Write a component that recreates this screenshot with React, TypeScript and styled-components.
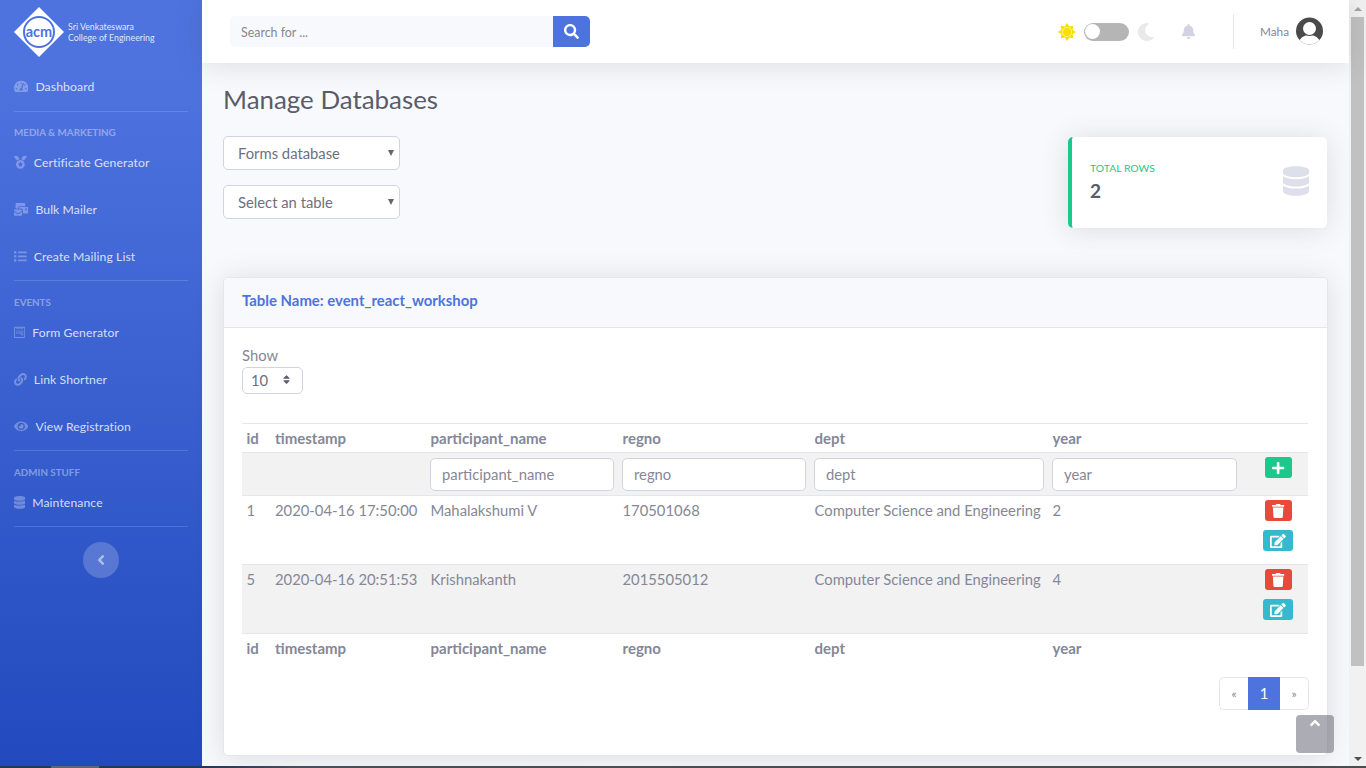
import React from 'react';
import styled, { createGlobalStyle } from 'styled-components';
import {
  FaAngleLeft,
  FaAngleUp,
  FaBell,
  FaDatabase,
  FaEdit,
  FaEye,
  FaLink,
  FaList,
  FaMailBulk,
  FaMedal,
  FaMoon,
  FaPlus,
  FaSearch,
  FaSort,
  FaTachometerAlt,
  FaTrash,
  FaWpforms,
} from 'react-icons/fa';

const font = `Lato, "Noto Sans", sans-serif`;

const GlobalStyle = createGlobalStyle`
  html, body {
    margin: 0;
    height: 768px;
    overflow: hidden;
  }

  body {
    font-family: ${font};
    font-size: 15px;
    color: #858796;
    background: #f8f9fc;
  }

  * {
    box-sizing: border-box;
  }
`;

const Shell = styled.div`
  display: flex;
  height: 766px;
  position: relative;
  overflow: hidden;
`;

const Sidebar = styled.nav`
  display: flex;
  flex-direction: column;
  flex: 0 0 202px;
  padding: 0 14px;
  background: linear-gradient(180deg, #4e73df 10%, #224abe 100%);
`;

const Brand = styled.div`
  display: flex;
  align-items: center;
  height: 64px;
  gap: 4px;
`;

const BrandText = styled.div`
  font-size: 8.8px;
  line-height: 11px;
  color: rgba(255, 255, 255, 0.85);
`;

const NavItem = styled.a`
  display: flex;
  align-items: center;
  gap: 7px;
  height: 47px;
  padding-bottom: 2px;
  font-size: 12.2px;
  letter-spacing: 0.1px;
  color: rgba(255, 255, 255, 0.8);
`;

const NavIcon = styled.span<{ $width: number }>`
  display: flex;
  flex: none;
  width: ${(p) => p.$width}px;
  height: 12.8px;
  color: rgba(255, 255, 255, 0.3);

  svg {
    width: 100%;
    height: 100%;
  }
`;

const Divider = styled.hr<{ $up?: boolean }>`
  width: 100%;
  height: 1px;
  margin: ${(p) => (p.$up ? '-1px 0 1px' : '0')};
  border: 0;
  flex: none;
  background: rgba(255, 255, 255, 0.15);
`;

const SectionTitle = styled.div`
  height: 28px;
  padding-top: 14px;
  line-height: 12px;
  font-size: 9.8px;
  font-weight: 700;
  color: rgba(255, 255, 255, 0.4);
  text-transform: uppercase;
`;

const CollapseButton = styled.button`
  display: flex;
  align-items: center;
  justify-content: center;
  align-self: center;
  width: 36px;
  height: 36px;
  margin-top: 14px;
  padding: 0;
  border: 0;
  border-radius: 50%;
  background: rgba(255, 255, 255, 0.2);
  color: rgba(255, 255, 255, 0.5);
  font-size: 16px;
`;

const Main = styled.div`
  display: flex;
  flex-direction: column;
  flex: 1;
  min-width: 0;
`;

const Topbar = styled.header`
  display: flex;
  align-items: center;
  flex: 0 0 63px;
  padding: 0 26px 0 28px;
  background: #fff;
  box-shadow: 0 2px 28px rgba(58, 59, 69, 0.15);
  position: relative;
`;

const SearchBox = styled.form`
  display: flex;
  width: 360px;
  height: 31px;
  margin-right: auto;
`;

const SearchInput = styled.input`
  flex: 1;
  min-width: 0;
  padding: 1px 11px 0;
  border: 0;
  border-radius: 5px 0 0 5px;
  background: #f8f9fc;
  font-family: ${font};
  font-size: 12.4px;

  &::placeholder {
    color: #858796;
  }
`;

const SearchButton = styled.button`
  display: flex;
  align-items: center;
  justify-content: center;
  width: 37px;
  padding: 0;
  border: 0;
  border-radius: 0 5px 5px 0;
  background: #4e73df;
  color: #fff;
  font-size: 15px;
`;

const ThemeSwitch = styled.div`
  display: flex;
  align-items: center;
  gap: 8px;
  margin-right: 26px;
`;

const Track = styled.div`
  display: flex;
  align-items: center;
  width: 45px;
  height: 18px;
  padding: 0 1.5px;
  border-radius: 9px;
  background: #b5b5b5;
`;

const Knob = styled.div`
  width: 15px;
  height: 15px;
  border-radius: 50%;
  background: #fff;
`;

const MoonIcon = styled(FaMoon)`
  color: #e9e9e9;
  font-size: 18px;
`;

const BellIcon = styled(FaBell)`
  color: #d1d3e2;
  font-size: 15px;
`;

const TopDivider = styled.div`
  width: 1px;
  height: 35px;
  margin: 0 26px 0 37px;
  background: #e3e6f0;
`;

const UserName = styled.span`
  font-size: 11.8px;
  color: #858796;
  margin-right: 7px;
`;

const Content = styled.main`
  flex: 1;
  padding: 0 22px 0 21px;
  min-height: 0;
`;

const Title = styled.h1`
  margin: 0;
  padding-top: 20px;
  height: 73px;
  font-size: 25.9px;
  line-height: 32px;
  font-weight: 400;
  color: #5a5c69;
`;

const FilterRow = styled.section`
  display: flex;
  justify-content: space-between;
  height: 141px;
`;

const SelectStack = styled.div`
  display: flex;
  flex-direction: column;
  gap: 15px;
`;

const SelectWrap = styled.div`
  position: relative;
  width: 177px;
  height: 34px;

  &::after {
    content: '';
    position: absolute;
    right: 6px;
    top: 14px;
    border-left: 3px solid transparent;
    border-right: 3px solid transparent;
    border-top: 6px solid #666;
    pointer-events: none;
  }
`;

const DbSelect = styled.select`
  appearance: none;
  width: 100%;
  height: 100%;
  padding: 0 14px;
  border: 1px solid #d1d3e2;
  border-radius: 5px;
  background: #fff;
  font-family: ${font};
  font-size: 14.8px;
  color: #6e707e;
`;

const StatCard = styled.div`
  display: flex;
  align-items: center;
  justify-content: space-between;
  width: 259px;
  height: 91px;
  margin: 1px 0 0;
  padding: 0 18px 2px 18px;
  border-left: 4px solid #1cc88a;
  border-radius: 5px;
  background: #fff;
  box-shadow: 0 2px 28px rgba(58, 59, 69, 0.15);
`;

const StatLabel = styled.div`
  font-size: 10.4px;
  line-height: 14px;
  color: #1cc88a;
  text-transform: uppercase;
`;

const StatValue = styled.div`
  margin-top: 4px;
  font-size: 19px;
  line-height: 24px;
  font-weight: 700;
  color: #5a5c69;
`;

const StatIcon = styled(FaDatabase)`
  width: 26px;
  height: 30px;
  margin-bottom: 1px;
  color: #dddfeb;
`;

const TableCard = styled.section`
  width: 1105px;
  height: 479px;
  border: 1px solid #e3e6f0;
  border-radius: 5px;
  background: #fff;
  box-shadow: 0 2px 28px rgba(58, 59, 69, 0.15);
  overflow: hidden;
`;

const CardHeader = styled.div`
  display: flex;
  align-items: center;
  height: 50px;
  padding: 0 18px 5px;
  background: #f8f9fc;
  border-bottom: 1px solid #e3e6f0;
  font-size: 14.9px;
  font-weight: 700;
  color: #4e73df;
`;

const CardBody = styled.div`
  padding: 17px 18px 0;
`;

const ShowLabel = styled.div`
  font-size: 14.8px;
  line-height: 20px;
  margin-bottom: 2px;
`;

const PageSize = styled.div`
  display: flex;
  align-items: center;
  justify-content: space-between;
  width: 61px;
  height: 27px;
  padding: 0 10px 2px 8px;
  border: 1px solid #d1d3e2;
  border-radius: 5px;
  font-size: 14.8px;
  color: #6e707e;

  svg {
    font-size: 11px;
    color: #5a5c69;
  }
`;

const DataTable = styled.table`
  width: 1066px;
  margin-top: 29px;
  table-layout: fixed;
  border-collapse: collapse;
  font-size: 14.8px;
`;

const HeadCell = styled.th`
  height: 29px;
  padding: 0 4.5px 1px;
  border-top: 1px solid #e3e6f0;
  text-align: left;
  font-size: 15px;
  font-weight: 700;
  color: #858796;
`;

const FilterCell = styled.td`
  height: 43px;
  padding: 0 4px;
  border-top: 1px solid #e3e6f0;
  background: #f2f2f2;
  vertical-align: middle;
`;

const DataCell = styled.td<{ $shaded?: boolean }>`
  height: 69px;
  padding: 4.5px 4.5px 0;
  border-top: 1px solid #e3e6f0;
  background: ${(p) => (p.$shaded ? '#f2f2f2' : '#fff')};
  vertical-align: top;
  line-height: 18px;
`;

const ActionCell = styled(DataCell)`
  padding: 4px 15px 0 0;
`;

const FilterActionCell = styled(FilterCell)`
  padding: 0 15px 13px 0;
`;

const FilterInput = styled.input`
  display: block;
  width: 100%;
  height: 33px;
  padding: 0 11px;
  border: 1px solid #d1d3e2;
  border-radius: 5px;
  background: #fff;
  font-family: ${font};
  font-size: 14.8px;

  &::placeholder {
    color: #858796;
  }
`;

const ActionStack = styled.div`
  display: flex;
  flex-direction: column;
  align-items: flex-end;
  gap: 9px;
`;

const ActionButton = styled.button<{ $color: string; $wide?: boolean }>`
  display: flex;
  align-items: center;
  justify-content: center;
  width: ${(p) => (p.$wide ? '30px' : '27px')};
  height: 21px;
  margin-right: ${(p) => (p.$wide ? '0' : '1px')};
  margin-left: auto;
  padding: 0;
  border: 0;
  border-radius: 3px;
  background: ${(p) => p.$color};
  color: #fff;

  svg {
    width: ${(p) => (p.$wide ? '15.75px' : '12.25px')};
    height: 14px;
  }
`;

const Pagination = styled.ul`
  display: flex;
  justify-content: flex-end;
  margin: 14px 0 0;
  padding: 0;
  list-style: none;
`;

const PageLink = styled.li<{ $active?: boolean }>`
  display: flex;
  align-items: center;
  justify-content: center;
  width: ${(p) => (p.$active ? '32px' : '29px')};
  height: 33px;
  border: 1px solid ${(p) => (p.$active ? '#4e73df' : '#e3e6f0')};
  background: ${(p) => (p.$active ? '#4e73df' : '#fff')};
  color: ${(p) => (p.$active ? '#fff' : '#858796')};
  font-size: ${(p) => (p.$active ? '14.8px' : '12px')};

  &:first-child {
    border-right: 0;
    border-radius: 5px 0 0 5px;
  }

  &:last-child {
    border-left: 0;
    border-radius: 0 5px 5px 0;
  }
`;

const ScrollTop = styled.a`
  position: absolute;
  left: 1296px;
  top: 715px;
  display: flex;
  justify-content: center;
  width: 38px;
  height: 38px;
  border-radius: 4px;
  background: rgba(90, 92, 105, 0.5);
  color: #fff;
  font-size: 16px;
`;

const Scrollbar = styled.div`
  display: flex;
  flex-direction: column;
  align-items: center;
  flex: 0 0 17px;
  background: #f1f1f1;
`;

const ScrollThumb = styled.div`
  flex: none;
  width: 13px;
  height: 649px;
  background: #c1c1c1;
`;

const ArrowButton = styled.div<{ $down?: boolean }>`
  width: 0;
  height: 0;
  margin: ${(p) => (p.$down ? 'auto 0 5px' : '7px 0 6px')};
  border-left: 4px solid transparent;
  border-right: 4px solid transparent;
  border-${(p) => (p.$down ? 'top' : 'bottom')}: 4px solid ${(p) => (p.$down ? '#505050' : '#a3a3a3')};
`;

const BottomStrip = styled.div`
  display: flex;
  height: 2px;
  background: linear-gradient(90deg, #26345f 0, #26345f 200px, #4a4e5c 300px, #4d4d4d 100%);
`;

const StripTab = styled.div`
  width: 48px;
  margin-left: 51px;
  background: #5d6577;
`;

const Logo = () => (
  <svg width="50" height="50" viewBox="0 0 50 50" style={{ flex: 'none' }}>
    <polygon points="25,0 50,25 25,50 0,25" fill="#fff" />
    <circle cx="25" cy="25" r="15" fill="none" stroke="#4e73df" strokeWidth="2" />
    <text
      x="25"
      y="29.5"
      textAnchor="middle"
      fontFamily="Lato, sans-serif"
      fontSize="14.5"
      fontWeight="700"
      fill="#4e73df"
    >
      acm
    </text>
  </svg>
);

const SunIcon = () => (
  <svg width="18" height="18" viewBox="0 0 18 18">
    <polygon
      fill="#f7e000"
      points="9,0 11.3,3.46 15.36,2.64 14.54,6.7 18,9 14.54,11.3 15.36,15.36 11.3,14.54 9,18 6.7,14.54 2.64,15.36 3.46,11.3 0,9 3.46,6.7 2.64,2.64 6.7,3.46"
    />
    <circle cx="9" cy="9" r="4.6" fill="#f7e000" stroke="#fdf6a0" strokeWidth="0.9" />
  </svg>
);

const UserAvatar = () => (
  <svg width="27" height="29" viewBox="0 0 27 29">
    <defs>
      <clipPath id="avatar-clip">
        <circle cx="13.5" cy="14" r="13.5" />
      </clipPath>
    </defs>
    <circle cx="13.5" cy="14" r="13.5" fill="#4a4a4a" />
    <g clipPath="url(#avatar-clip)">
      <ellipse cx="13.5" cy="26" rx="10.5" ry="8" fill="#fff" />
      <circle cx="13.5" cy="11.5" r="7.5" fill="#4a4a4a" />
      <circle cx="13.5" cy="11.5" r="6.5" fill="#fff" />
    </g>
  </svg>
);

const columns = [
  { key: 'id', width: 28.5 },
  { key: 'timestamp', width: 155.5 },
  { key: 'participant_name', width: 192, filter: true },
  { key: 'regno', width: 192, filter: true },
  { key: 'dept', width: 238, filter: true },
  { key: 'year', width: 193, filter: true },
  { key: '', width: 67 },
];

const rows = [
  ['1', '2020-04-16 17:50:00', 'Mahalakshumi V', '170501068', 'Computer Science and Engineering', '2'],
  ['5', '2020-04-16 20:51:53', 'Krishnakanth', '2015505012', 'Computer Science and Engineering', '4'],
];

const HeaderRow = () => (
  <tr>
    {columns.map((c) => (
      <HeadCell key={c.key}>{c.key}</HeadCell>
    ))}
  </tr>
);

const App = () => {
  return (
    <>
      <GlobalStyle />
      <Shell>
        <Sidebar>
          <Brand>
            <Logo />
            <BrandText>
              Sri Venkateswara
              <br />
              College of Engineering
            </BrandText>
          </Brand>
          <NavItem>
            <NavIcon $width={14.4}>
              <FaTachometerAlt />
            </NavIcon>
            Dashboard
          </NavItem>
          <Divider />
          <SectionTitle>Media &amp; Marketing</SectionTitle>
          <NavItem>
            <NavIcon $width={12.8}>
              <FaMedal />
            </NavIcon>
            Certificate Generator
          </NavItem>
          <NavItem>
            <NavIcon $width={14.4}>
              <FaMailBulk />
            </NavIcon>
            Bulk Mailer
          </NavItem>
          <NavItem>
            <NavIcon $width={12.8}>
              <FaList />
            </NavIcon>
            Create Mailing List
          </NavItem>
          <Divider $up />
          <SectionTitle>Events</SectionTitle>
          <NavItem>
            <NavIcon $width={11.2}>
              <FaWpforms />
            </NavIcon>
            Form Generator
          </NavItem>
          <NavItem>
            <NavIcon $width={12.8}>
              <FaLink />
            </NavIcon>
            Link Shortner
          </NavItem>
          <NavItem>
            <NavIcon $width={14.4}>
              <FaEye />
            </NavIcon>
            View Registration
          </NavItem>
          <Divider $up />
          <SectionTitle>Admin Stuff</SectionTitle>
          <NavItem>
            <NavIcon $width={11.2}>
              <FaDatabase />
            </NavIcon>
            Maintenance
          </NavItem>
          <Divider $up />
          <CollapseButton>
            <FaAngleLeft />
          </CollapseButton>
        </Sidebar>

        <Main>
          <Topbar>
            <SearchBox>
              <SearchInput placeholder="Search for ..." />
              <SearchButton type="button">
                <FaSearch />
              </SearchButton>
            </SearchBox>
            <ThemeSwitch>
              <SunIcon />
              <Track>
                <Knob />
              </Track>
              <MoonIcon />
            </ThemeSwitch>
            <BellIcon />
            <TopDivider />
            <UserName>Maha</UserName>
            <UserAvatar />
          </Topbar>

          <Content>
            <Title>Manage Databases</Title>
            <FilterRow>
              <SelectStack>
                <SelectWrap>
                  <DbSelect defaultValue="forms">
                    <option value="forms">Forms database</option>
                  </DbSelect>
                </SelectWrap>
                <SelectWrap>
                  <DbSelect defaultValue="none">
                    <option value="none">Select an table</option>
                  </DbSelect>
                </SelectWrap>
              </SelectStack>
              <StatCard>
                <div>
                  <StatLabel>Total Rows</StatLabel>
                  <StatValue>2</StatValue>
                </div>
                <StatIcon />
              </StatCard>
            </FilterRow>

            <TableCard>
              <CardHeader>Table Name: event_react_workshop</CardHeader>
              <CardBody>
                <ShowLabel>Show</ShowLabel>
                <PageSize>
                  10
                  <FaSort />
                </PageSize>
                <DataTable>
                  <colgroup>
                    {columns.map((c) => (
                      <col key={c.key} style={{ width: c.width }} />
                    ))}
                  </colgroup>
                  <thead>
                    <HeaderRow />
                    <tr>
                      {columns.map((c) =>
                        c.key === '' ? (
                          <FilterActionCell key="action">
                            <ActionButton $color="#1cc88a">
                              <FaPlus />
                            </ActionButton>
                          </FilterActionCell>
                        ) : (
                          <FilterCell key={c.key}>
                            {c.filter && <FilterInput placeholder={c.key} />}
                          </FilterCell>
                        ),
                      )}
                    </tr>
                  </thead>
                  <tbody>
                    {rows.map((row, i) => (
                      <tr key={row[0]}>
                        {row.map((value, j) => (
                          <DataCell key={j} $shaded={i === 1}>
                            {value}
                          </DataCell>
                        ))}
                        <ActionCell $shaded={i === 1}>
                          <ActionStack>
                            <ActionButton $color="#e74a3b">
                              <FaTrash />
                            </ActionButton>
                            <ActionButton $color="#36b9cc" $wide>
                              <FaEdit />
                            </ActionButton>
                          </ActionStack>
                        </ActionCell>
                      </tr>
                    ))}
                  </tbody>
                  <tfoot>
                    <HeaderRow />
                  </tfoot>
                </DataTable>
                <Pagination>
                  <PageLink>«</PageLink>
                  <PageLink $active>1</PageLink>
                  <PageLink>»</PageLink>
                </Pagination>
              </CardBody>
            </TableCard>
          </Content>
        </Main>

        <Scrollbar>
          <ArrowButton />
          <ScrollThumb />
          <ArrowButton $down />
        </Scrollbar>

        <ScrollTop>
          <FaAngleUp />
        </ScrollTop>
      </Shell>
      <BottomStrip>
        <StripTab />
      </BottomStrip>
    </>
  );
};

export default App;
